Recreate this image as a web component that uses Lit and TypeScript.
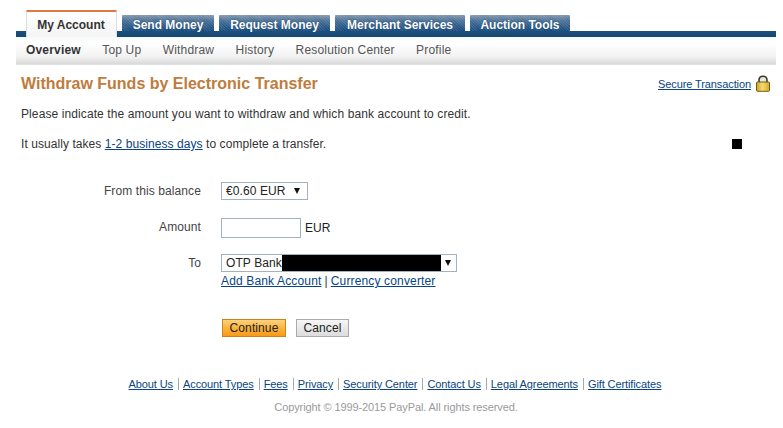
import { LitElement, html, css, svg } from "lit";
import { customElement } from "lit/decorators.js";

const tabs = [
  { t: "Send Money", w: 92 },
  { t: "Request Money", w: 111 },
  { t: "Merchant Services", w: 130 },
  { t: "Auction Tools", w: 100 },
];
const sub = ["Top Up", "Withdraw", "History", "Resolution Center", "Profile"];
const foot = ["About Us", "Account Types", "Fees", "Privacy", "Security Center", "Contact Us", "Legal Agreements", "Gift Certificates"];

const lock = svg`<svg width="16" height="17" viewBox="0 0 16 17">
  <defs><linearGradient id="g" x1="0" x2="1" y1="0" y2="0"><stop offset="0" stop-color="#c9a227"/><stop offset=".45" stop-color="#f6dc6a"/><stop offset="1" stop-color="#d3a92b"/></linearGradient></defs>
  <path d="M4 8V5.2C4 2.6 5.6 1.2 8 1.2s4 1.4 4 4V8" fill="#e8e8e0" stroke="#3c3a30" stroke-width="1.6"/>
  <rect x="1.5" y="7" width="13" height="9.3" rx="1" fill="url(#g)" stroke="#6d5a1c" stroke-width="1"/>
</svg>`;

@customElement("app-root")
export class AppRoot extends LitElement {
  static styles = css`
    :host { display: block; width: 783px; height: 428px; overflow: hidden; background: #fff; font-family: "Liberation Sans", Arial, sans-serif; font-size: 12px; color: #333; letter-spacing: .1px; }
    a { color: #084482; text-decoration: underline; }
    .top { margin: 0 7px 0 16px; padding-top: 10px; }
    .tabs { display: flex; align-items: flex-end; height: 27px; padding-left: 10px; gap: 5px; background: linear-gradient(#fff 0 21px, #1d4f7f 21px, #154773); }
    .tab { height: 16px; margin-bottom: 6px; background: repeating-linear-gradient(45deg, rgba(255,255,255,.1) 0 1px, transparent 1px 2px), linear-gradient(#8397ab, #4a7096 35%, #144a7c); color: #fff; font-weight: bold; font-size: 12px; letter-spacing: 0; line-height: 20px; text-align: center; text-shadow: 0 0 1px #0b3158; box-sizing: border-box; border-radius: 1px 1px 0 0; white-space: nowrap; }
    .tab.on { width: 91px; height: 27px; margin: 0; padding-right: 1px; background: linear-gradient(#fff, #f4f4f4); color: #333; border-top: 2px solid #e0793f; border-left: 1px solid #ddd; border-right: 1px solid #ddd; text-shadow: none; line-height: 26px; }
    .sub { display: flex; height: 28px; align-items: center; padding: 0 0 2px 10px; box-sizing: border-box; gap: 21.4px; background: linear-gradient(#f7f9fa, #fff 20%, #f2f2f2 70%, #d9d9d9 97%, #e8edf2); color: #555; letter-spacing: .18px; }
    .sub b { color: #333; }
    .head { display: flex; justify-content: space-between; align-items: center; margin: 10px 12px 0 21px; height: 18px; }
    h1 { margin: 0; font-size: 16px; font-weight: bold; color: #c07c3c; letter-spacing: 0; }
    .sec { display: flex; align-items: center; gap: 4px; font-size: 11px; letter-spacing: -.1px; }
    .sec svg { display: block; margin-top: -2px; }
    p { margin: 0; padding-left: 21px; line-height: 14px; }
    .p1 { margin-top: 14px; }
    .p2 { margin-top: 16px; display: flex; justify-content: space-between; padding-right: 41px; align-items: center; height: 14px; letter-spacing: .065px; }
    .sq { width: 10px; height: 10px; background: #000; }
    form { margin-top: 31px; display: grid; grid-template-columns: 201px auto; column-gap: 20px; justify-content: start; }
    .lab { text-align: right; align-self: center; color: #444; }
    .sel { border: 1px solid #a5b1bd; height: 18px; box-sizing: border-box; display: flex; align-items: center; position: relative; background: #fff; color: #222; white-space: nowrap; padding-left: 4px; }
    .s1 { width: 87px; }
    .s2 { width: 236px; }
    .arr { position: absolute; right: 5px; top: 5px; width: 0; height: 0; border: 3.5px solid transparent; border-top: 6px solid #111; border-bottom: 0; }
    .s1 .arr { right: 7px; }
    .r { grid-column: 2; }
    .amt { display: flex; align-items: center; gap: 4px; margin: 18px 0 0; color: #222; }
    .inp { width: 80px; height: 20px; border: 1px solid #a5b1bd; box-sizing: border-box; background: #fff; }
    .l2 { margin-top: 16px; align-self: center; }
    .l3 { margin-top: 16px; }
    .mask { position: absolute; left: 60px; top: 0; width: 159px; height: 16px; background: #000; }
    .links { margin-top: 3px; line-height: 13px; height: 14px; letter-spacing: .15px; display: flex; gap: 3px; }
    .btns { display: flex; gap: 10px; margin: 30px 0 0 1px; }
    .btn { height: 18px; box-sizing: border-box; font-size: 12px; line-height: 16px; text-align: center; color: #222; }
    .go { width: 64px; border: 1px solid #c9851c; background: linear-gradient(#fdd17d, #fbb13a 55%, #f79a17); }
    .no { width: 53px; border: 1px solid #aaa; background: linear-gradient(#f6f6f6, #dcdcdc); }
    .foot { margin-top: 41px; display: flex; justify-content: center; font-size: 11px; letter-spacing: -.1px; margin-left: 8px; }
    .foot a { padding: 0 5px 0 4px; border-left: 1px solid #a8a8a8; line-height: 12px; }
    .foot a:first-child { border: 0; }
    .copy { margin-top: 11px; text-align: center; color: #9a9a9a; font-size: 11px; letter-spacing: -.1px; margin-left: 9px; }
  `;

  render() {
    return html`
      <div class="top">
        <div class="tabs">
          <div class="tab on">My Account</div>
          ${tabs.map((x) => html`<div class="tab" style="width:${x.w}px">${x.t}</div>`)}
        </div>
        <div class="sub"><b>Overview</b>${sub.map((s) => html`<span>${s}</span>`)}</div>
      </div>
      <div class="head">
        <h1>Withdraw Funds by Electronic Transfer</h1>
        <div class="sec"><a href="#">Secure Transaction</a>${lock}</div>
      </div>
      <p class="p1">Please indicate the amount you want to withdraw and which bank account to credit.</p>
      <p class="p2"><span>It usually takes <a href="#">1-2 business days</a> to complete a transfer.</span><span class="sq"></span></p>
      <form>
        <div class="lab">From this balance</div>
        <div class="sel s1">€0.60 EUR<i class="arr"></i></div>
        <div class="lab l2">Amount</div>
        <div class="amt"><div class="inp"></div>EUR</div>
        <div class="lab l3">To</div>
        <div class="sel s2 l3">OTP Bank<i class="mask"></i><i class="arr"></i></div>
        <div class="r links"><a href="#">Add Bank Account</a><span>|</span><a href="#">Currency converter</a></div>
        <div class="r btns"><div class="btn go">Continue</div><div class="btn no">Cancel</div></div>
      </form>
      <div class="foot">${foot.map((f) => html`<a href="#">${f}</a>`)}</div>
      <div class="copy">Copyright © 1999-2015 PayPal. All rights reserved.</div>
    `;
  }
}
